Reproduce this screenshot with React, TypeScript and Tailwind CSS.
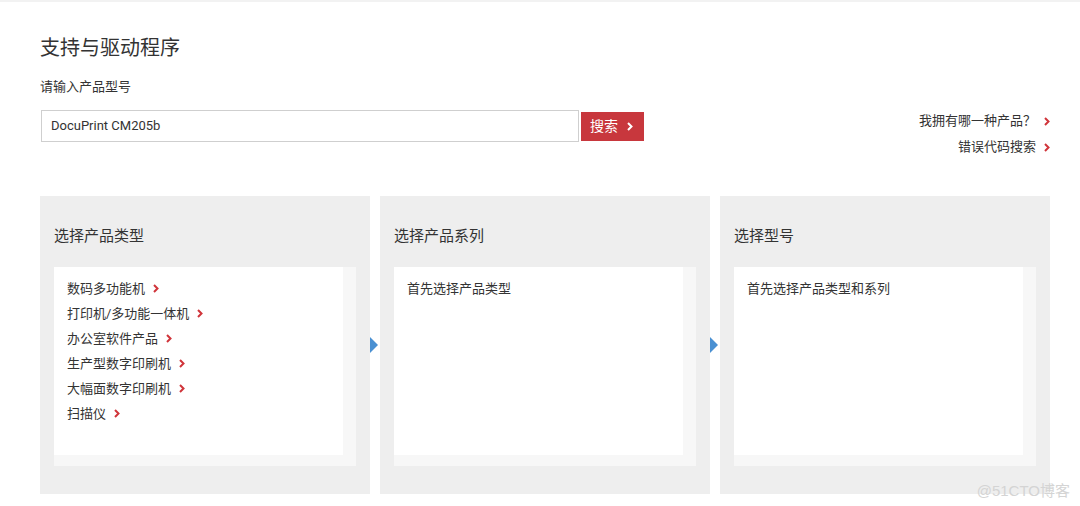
const font = { fontFamily: 'Roboto, "Noto Sans CJK SC", sans-serif' }

function Chevron({ className = '' }: { className?: string }) {
  return (
    <svg width="6" height="9" viewBox="0 0 6 9" className={className}>
      <path d="M1 1 L4.5 4.5 L1 8" fill="none" stroke="currentColor" strokeWidth="2" />
    </svg>
  )
}

const productTypes = [
  '数码多功能机',
  '打印机/多功能一体机',
  '办公室软件产品',
  '生产型数字印刷机',
  '大幅面数字印刷机',
  '扫描仪',
]

function Panel({ title, children, arrow }: { title: string; children: React.ReactNode; arrow?: boolean }) {
  return (
    <div className="relative shrink-0 w-[330px] h-[298px] bg-[#eeeeee] px-[14px] pt-[28px]">
      {arrow && (
        <div className="absolute left-[-10px] top-[141px] w-0 h-0 border-y-[8px] border-y-transparent border-l-[8px] border-l-[#4a90d2]" />
      )}
      <h2 className="text-[15px] leading-[24px] text-[#333] h-[43px]">{title}</h2>
      <div className="h-[199px] bg-[#f7f7f7] pr-[13px] pb-[11px]">
        <div className="h-full bg-white pl-[13px] pt-[9px]">{children}</div>
      </div>
    </div>
  )
}

export default function App() {
  return (
    <div className="w-[1080px] h-[506px] bg-white overflow-hidden relative" style={font}>
      <div className="h-[2px] bg-[#f2f2f2]" />
      <div className="pl-[40px] pr-[30px]">
        <h1 className="text-[20px] leading-[28px] text-[#333] mt-[32px]">支持与驱动程序</h1>
        <p className="text-[13px] leading-[18px] text-[#333] mt-[16px]">请输入产品型号</p>
        <div className="flex items-start justify-between mt-[14px]">
          <div className="flex items-center">
            <div className="w-[538px] h-[32px] border border-[#cfcfcf] flex items-center pl-[9px] text-[13px] text-[#333] ml-[1px]">
              DocuPrint CM205b
            </div>
            <button className="ml-[2px] w-[63px] h-[29px] bg-[#c8373d] text-white text-[14px] flex items-center pl-[9px] gap-[9px]">
              搜索
              <Chevron className="text-white" />
            </button>
          </div>
          <div className="flex flex-col items-end text-[13px] text-[#333] leading-[26px] mt-[-2px]">
            <div className="flex items-center gap-[8px]">
              我拥有哪一种产品？
              <Chevron className="text-[#d0343a]" />
            </div>
            <div className="flex items-center gap-[8px]">
              错误代码搜索
              <Chevron className="text-[#d0343a]" />
            </div>
          </div>
        </div>
        <div className="flex gap-[10px] mt-[36px]">
          <Panel title="选择产品类型">
            <ul className="text-[13px] text-[#333]">
              {productTypes.map((t) => (
                <li key={t} className="flex items-center gap-[8px] h-[25px]">
                  {t}
                  <Chevron className="text-[#d0343a]" />
                </li>
              ))}
            </ul>
          </Panel>
          <Panel title="选择产品系列" arrow>
            <p className="text-[13px] text-[#333] leading-[25px]">首先选择产品类型</p>
          </Panel>
          <Panel title="选择型号" arrow>
            <p className="text-[13px] text-[#333] leading-[25px]">首先选择产品类型和系列</p>
          </Panel>
        </div>
      </div>
      <div className="absolute right-[10px] bottom-[4px] text-[15px] text-[#d4d4d4]" style={{ fontFamily: '"Liberation Sans", "Noto Sans CJK SC", sans-serif' }}>
        @51CTO博客
      </div>
    </div>
  )
}
